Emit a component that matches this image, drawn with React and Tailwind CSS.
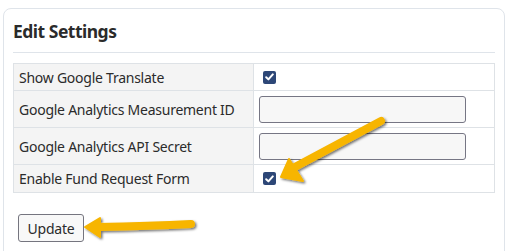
import React from "react";

function Check() {
  return (
    <div className="ml-[4px] w-[13px] h-[13px] rounded-[2px] bg-[#2d4777] flex items-center justify-center">
      <svg width="9" height="8" viewBox="0 0 9 8">
        <path d="M1.2 4.2 L3.4 6.4 L7.8 1.4" stroke="#fff" strokeWidth="2" fill="none" strokeLinecap="round" strokeLinejoin="round" />
      </svg>
    </div>
  );
}

function Input() {
  return <div className="w-[207px] h-[27px] rounded-[3px] border border-[#767684] bg-[#f7f7f7]" />;
}

function Row({ label, h, children, last }) {
  return (
    <div className={`flex ${last ? "" : "border-b border-[#dee2e6]"}`} style={{ height: h }}>
      <div className="w-[240px] shrink-0 bg-[#f4f4f4] border-r border-[#dee2e6] flex items-center pl-[5px] text-[14px] tracking-[-0.25px] text-[#2b2b2b]">
        {label}
      </div>
      <div className="flex-1 flex items-center pl-[5px]">{children}</div>
    </div>
  );
}

export default function App() {
  return (
    <div
      className="relative w-[506px] h-[251px] bg-white overflow-hidden pt-[8px] pl-[3px]"
      style={{ fontFamily: '"Noto Sans", "Open Sans", sans-serif' }}
    >
      <div className="w-[502px] h-[252px] border border-[#dfe4ea] rounded-[8px] px-[9px] pt-[11px]">
        <h2 className="text-[17.5px] leading-[22px] font-bold text-[#2b2b2b] tracking-[-0.5px]">Edit Settings</h2>
        <div className="mt-[10px] border-t border-[#dfe4ea]" />
        <div className="mt-[10px] border border-[#dee2e6]">
          <Row label="Show Google Translate" h={27}>
            <Check />
          </Row>
          <Row label="Google Analytics Measurement ID" h={37}>
            <Input />
          </Row>
          <Row label="Google Analytics API Secret" h={37}>
            <Input />
          </Row>
          <Row label="Enable Fund Request Form" h={27} last>
            <Check />
          </Row>
        </div>
        <button className="mt-[21px] ml-[5px] w-[66px] h-[28px] rounded-[3px] border border-[#75757f] bg-[#f8f8f8] text-[14px] tracking-[-0.2px] text-[#2b2b2b]">
          Update
        </button>
      </div>
      <svg className="absolute left-0 top-0 pointer-events-none" width="506" height="251" viewBox="0 0 506 251">
        <defs>
          <filter id="sh" x="-20%" y="-20%" width="140%" height="140%">
            <feDropShadow dx="1.5" dy="1.5" stdDeviation="1.2" floodColor="#000" floodOpacity="0.55" />
          </filter>
        </defs>
        <g filter="url(#sh)" fill="#f7b500" stroke="#f7b500">
          <line x1="381" y1="121" x2="293" y2="168" strokeWidth="8" strokeLinecap="round" />
          <polygon points="281,177 289,159 303,181" strokeWidth="2" strokeLinejoin="round" />
          <path d="M98 227 Q150 226 191 224" fill="none" strokeWidth="8" strokeLinecap="round" />
          <polygon points="85,227 100,218 100,237" strokeWidth="2" strokeLinejoin="round" />
        </g>
      </svg>
    </div>
  );
}
